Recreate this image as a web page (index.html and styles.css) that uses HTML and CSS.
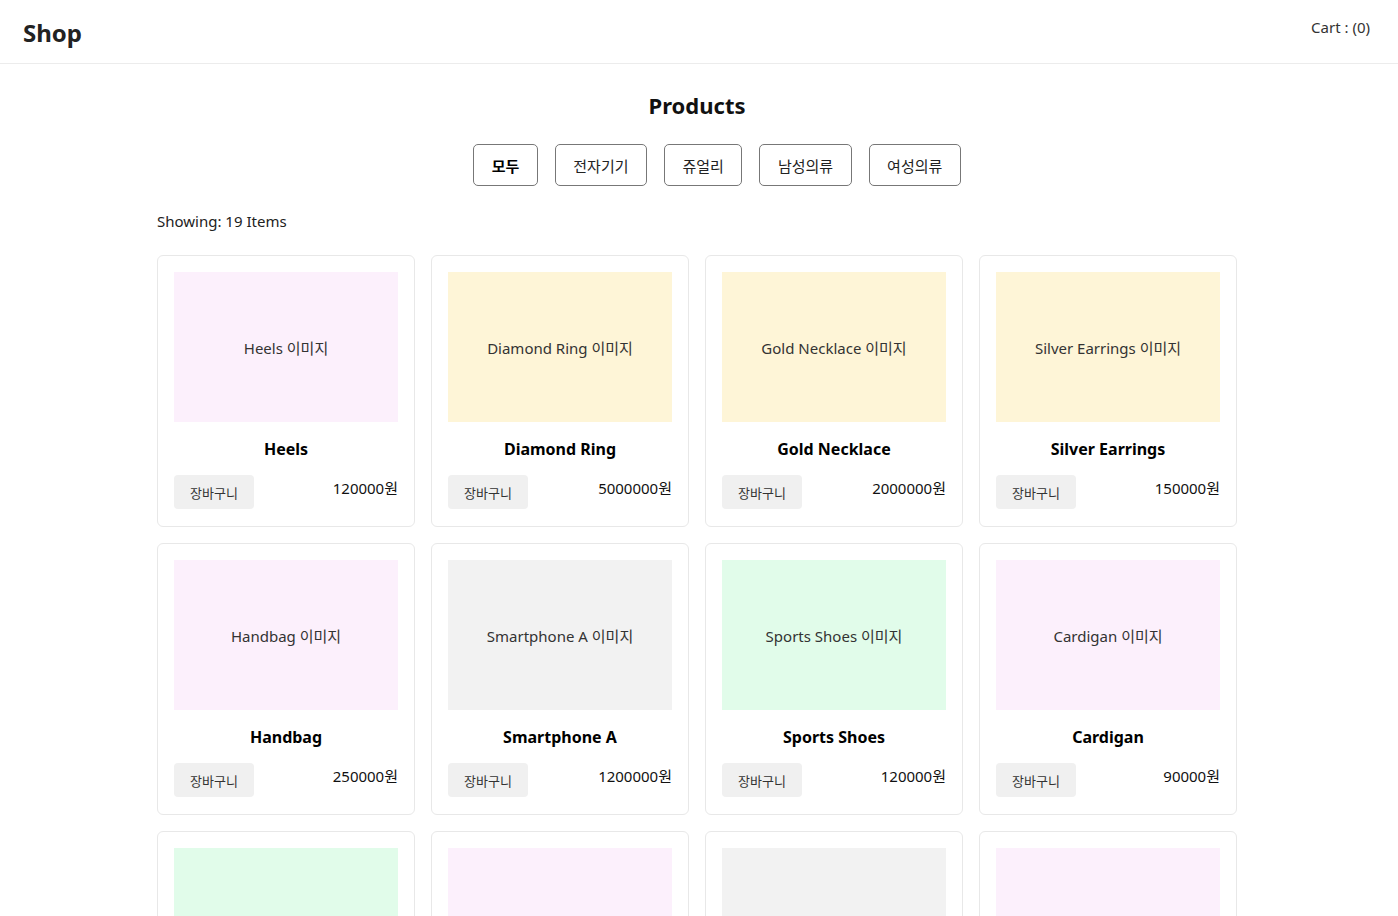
FILE: index.html
```html
<!DOCTYPE html>
<html lang="ko">
<head>
<meta charset="utf-8">
<title>Shop</title>
<link rel="stylesheet" href="styles.css">
</head>
<body>
<header class="header">
  <div class="logo">Shop</div>
  <div class="cart">Cart : (0)</div>
</header>
<main class="main">
  <h2 class="title">Products</h2>
  <div class="filters">
    <button class="filter active">모두</button>
    <button class="filter">전자기기</button>
    <button class="filter">쥬얼리</button>
    <button class="filter">남성의류</button>
    <button class="filter">여성의류</button>
  </div>
  <div class="count">Showing: 19 Items</div>
  <div class="grid">
    <div class="card"><div class="thumb pink">Heels 이미지</div><h3 class="name">Heels</h3><div class="foot"><button class="add">장바구니</button><span class="price">120000원</span></div></div>
    <div class="card"><div class="thumb yellow">Diamond Ring 이미지</div><h3 class="name">Diamond Ring</h3><div class="foot"><button class="add">장바구니</button><span class="price">5000000원</span></div></div>
    <div class="card"><div class="thumb yellow">Gold Necklace 이미지</div><h3 class="name">Gold Necklace</h3><div class="foot"><button class="add">장바구니</button><span class="price">2000000원</span></div></div>
    <div class="card"><div class="thumb yellow">Silver Earrings 이미지</div><h3 class="name">Silver Earrings</h3><div class="foot"><button class="add">장바구니</button><span class="price">150000원</span></div></div>
    <div class="card"><div class="thumb pink">Handbag 이미지</div><h3 class="name">Handbag</h3><div class="foot"><button class="add">장바구니</button><span class="price">250000원</span></div></div>
    <div class="card"><div class="thumb gray">Smartphone A 이미지</div><h3 class="name">Smartphone A</h3><div class="foot"><button class="add">장바구니</button><span class="price">1200000원</span></div></div>
    <div class="card"><div class="thumb green">Sports Shoes 이미지</div><h3 class="name">Sports Shoes</h3><div class="foot"><button class="add">장바구니</button><span class="price">120000원</span></div></div>
    <div class="card"><div class="thumb pink">Cardigan 이미지</div><h3 class="name">Cardigan</h3><div class="foot"><button class="add">장바구니</button><span class="price">90000원</span></div></div>
    <div class="card"><div class="thumb green">Jeans 이미지</div><h3 class="name">Jeans</h3><div class="foot"><button class="add">장바구니</button><span class="price">80000원</span></div></div>
    <div class="card"><div class="thumb pink">Dress 이미지</div><h3 class="name">Dress</h3><div class="foot"><button class="add">장바구니</button><span class="price">150000원</span></div></div>
    <div class="card"><div class="thumb gray">Laptop 이미지</div><h3 class="name">Laptop</h3><div class="foot"><button class="add">장바구니</button><span class="price">2500000원</span></div></div>
    <div class="card"><div class="thumb pink">Skirt 이미지</div><h3 class="name">Skirt</h3><div class="foot"><button class="add">장바구니</button><span class="price">60000원</span></div></div>
    <div class="card"><div class="thumb green">T-Shirt 이미지</div><h3 class="name">T-Shirt</h3><div class="foot"><button class="add">장바구니</button><span class="price">30000원</span></div></div>
    <div class="card"><div class="thumb gray">Tablet 이미지</div><h3 class="name">Tablet</h3><div class="foot"><button class="add">장바구니</button><span class="price">800000원</span></div></div>
    <div class="card"><div class="thumb yellow">Bracelet 이미지</div><h3 class="name">Bracelet</h3><div class="foot"><button class="add">장바구니</button><span class="price">300000원</span></div></div>
    <div class="card"><div class="thumb green">Jacket 이미지</div><h3 class="name">Jacket</h3><div class="foot"><button class="add">장바구니</button><span class="price">200000원</span></div></div>
    <div class="card"><div class="thumb gray">Headphones 이미지</div><h3 class="name">Headphones</h3><div class="foot"><button class="add">장바구니</button><span class="price">350000원</span></div></div>
    <div class="card"><div class="thumb pink">Blouse 이미지</div><h3 class="name">Blouse</h3><div class="foot"><button class="add">장바구니</button><span class="price">70000원</span></div></div>
    <div class="card"><div class="thumb green">Suit 이미지</div><h3 class="name">Suit</h3><div class="foot"><button class="add">장바구니</button><span class="price">500000원</span></div></div>
  </div>
</main>
</body>
</html>
```

FILE: styles.css
```css
* { box-sizing: border-box; }
body {
  margin: 0;
  font-family: "Noto Sans", "Noto Sans CJK KR", sans-serif;
  color: #111;
  background: #fff;
}
.header {
  display: flex;
  justify-content: space-between;
  align-items: flex-start;
  height: 64px;
  padding: 0 28px 0 23px;
  border-bottom: 1px solid #ececec;
}
.logo {
  margin-top: 16px;
  font-size: 24px;
  line-height: 34px;
  font-weight: 700;
  color: #222;
}
.cart {
  margin-top: 17px;
  font-size: 15px;
  line-height: 20px;
  color: #333;
}
.main {
  width: 1084px;
  margin: 0 auto;
  padding-right: 4px;
}
.title {
  margin: 26px 0 0;
  text-align: center;
  font-size: 22px;
  line-height: 30px;
  font-weight: 700;
}
.filters {
  display: flex;
  justify-content: center;
  gap: 17px;
  margin-top: 24px;
  padding-left: 40px;
}
.filter {
  height: 42px;
  padding: 0 17.5px;
  border: 1px solid #777;
  border-radius: 5px;
  background: #fff;
  font-family: "Noto Sans CJK KR", sans-serif;
  font-size: 15px;
  color: #222;
}
.filter.active {
  font-weight: 700;
  color: #000;
}
.count {
  margin-top: 25px;
  font-size: 15px;
  line-height: 20px;
  color: #222;
}
.grid {
  display: grid;
  grid-template-columns: repeat(4, 1fr);
  gap: 16px 16px;
  margin-top: 24px;
}
.card {
  border: 1px solid #e8e8e8;
  border-radius: 6px;
  padding: 16px 16px 17px;
  display: flex;
  flex-direction: column;
}
.thumb {
  height: 150px;
  display: flex;
  align-items: center;
  justify-content: center;
  font-size: 15px;
  color: #333;
}
.pink { background: #fcf0fc; }
.yellow { background: #fef5d7; }
.gray { background: #f2f2f2; }
.green { background: #e1fcea; }
.name {
  margin: 16px 0 0;
  text-align: center;
  font-size: 16px;
  line-height: 22px;
  font-weight: 700;
  color: #000;
}
.foot {
  display: flex;
  justify-content: space-between;
  align-items: flex-start;
  margin-top: 15px;
}
.add {
  width: 80px;
  height: 34px;
  border: none;
  border-radius: 4px;
  background: #f0f0f0;
  font-family: "Noto Sans CJK KR", sans-serif;
  font-size: 13px;
  color: #333;
}
.price {
  font-size: 15px;
  line-height: 26px;
  color: #111;
}
```
